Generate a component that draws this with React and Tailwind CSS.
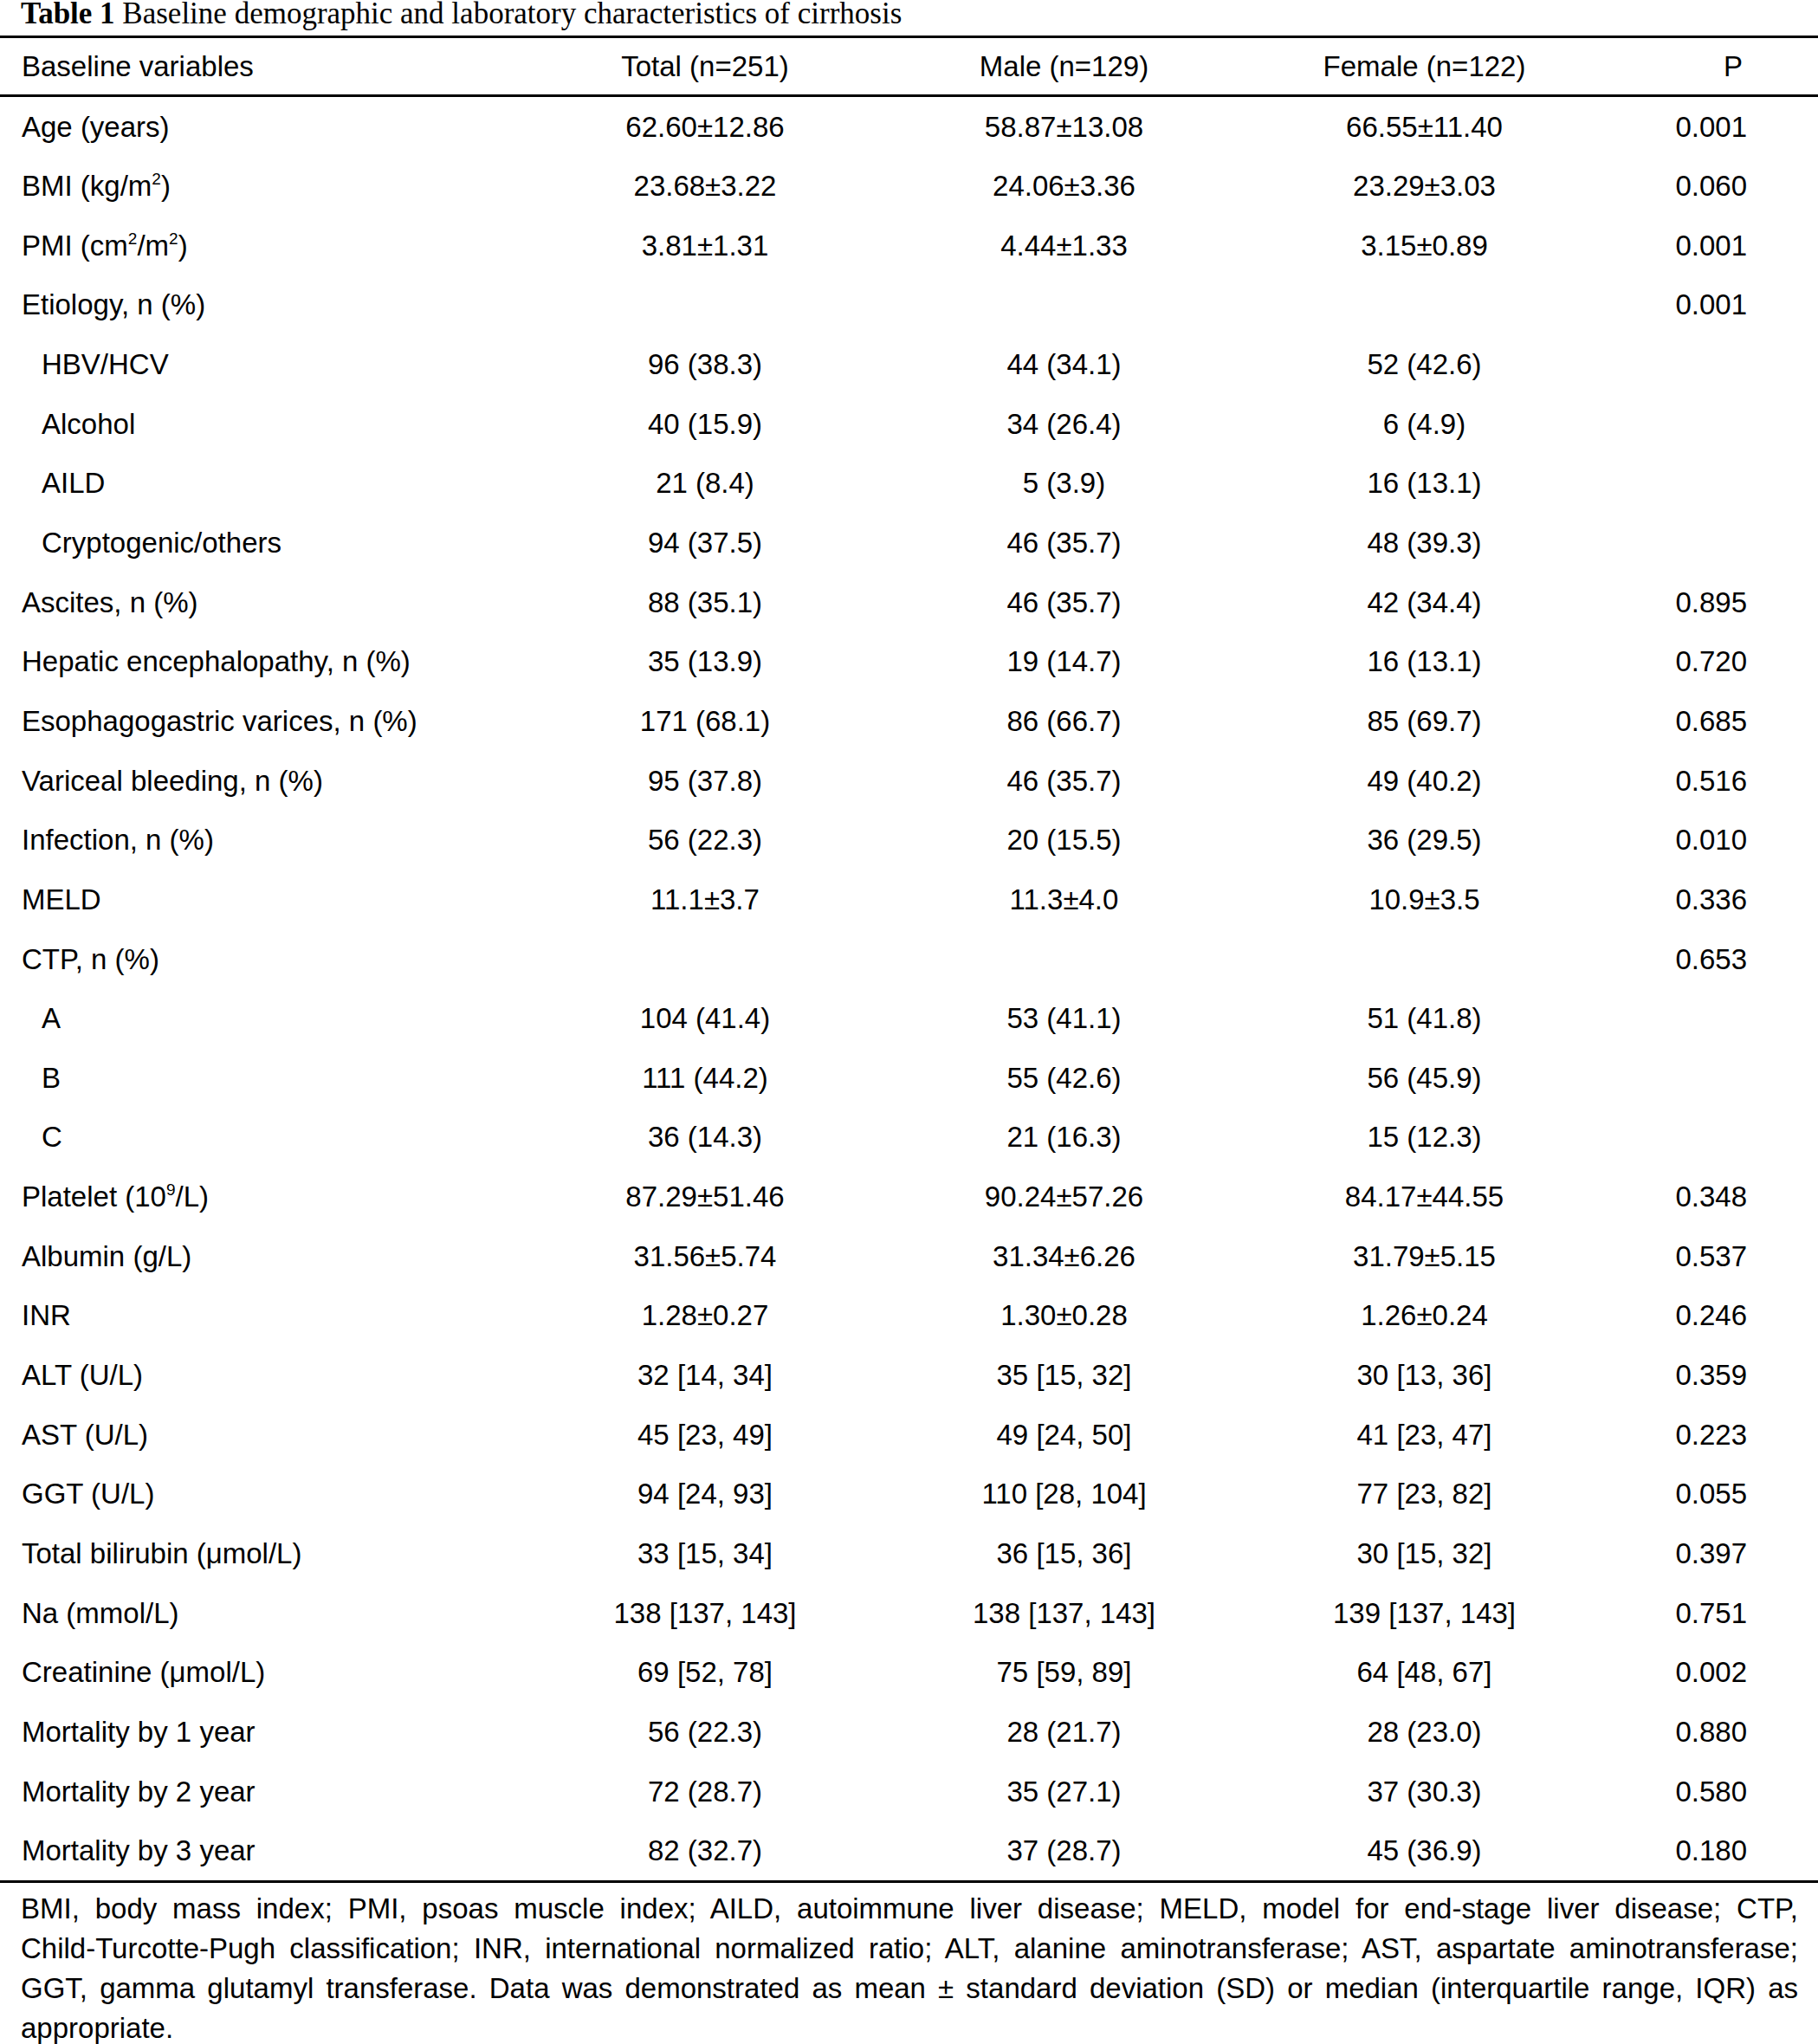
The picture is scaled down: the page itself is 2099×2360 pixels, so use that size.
const Sup = ({ children }) => <sup className="text-[19px] relative -top-[13px]">{children}</sup>;

const rows = [
  { label: 'Age (years)', v: ['62.60±12.86', '58.87±13.08', '66.55±11.40', '0.001'] },
  { label: <>BMI (kg/m<Sup>2</Sup>)</>, v: ['23.68±3.22', '24.06±3.36', '23.29±3.03', '0.060'] },
  { label: <>PMI (cm<Sup>2</Sup>/m<Sup>2</Sup>)</>, v: ['3.81±1.31', '4.44±1.33', '3.15±0.89', '0.001'] },
  { label: 'Etiology, n (%)', v: ['', '', '', '0.001'] },
  { label: 'HBV/HCV', sub: true, v: ['96 (38.3)', '44 (34.1)', '52 (42.6)', ''] },
  { label: 'Alcohol', sub: true, v: ['40 (15.9)', '34 (26.4)', '6 (4.9)', ''] },
  { label: 'AILD', sub: true, v: ['21 (8.4)', '5 (3.9)', '16 (13.1)', ''] },
  { label: 'Cryptogenic/others', sub: true, v: ['94 (37.5)', '46 (35.7)', '48 (39.3)', ''] },
  { label: 'Ascites, n (%)', v: ['88 (35.1)', '46 (35.7)', '42 (34.4)', '0.895'] },
  { label: 'Hepatic encephalopathy, n (%)', v: ['35 (13.9)', '19 (14.7)', '16 (13.1)', '0.720'] },
  { label: 'Esophagogastric varices, n (%)', v: ['171 (68.1)', '86 (66.7)', '85 (69.7)', '0.685'] },
  { label: 'Variceal bleeding, n (%)', v: ['95 (37.8)', '46 (35.7)', '49 (40.2)', '0.516'] },
  { label: 'Infection, n (%)', v: ['56 (22.3)', '20 (15.5)', '36 (29.5)', '0.010'] },
  { label: 'MELD', v: ['11.1±3.7', '11.3±4.0', '10.9±3.5', '0.336'] },
  { label: 'CTP, n (%)', v: ['', '', '', '0.653'] },
  { label: 'A', sub: true, v: ['104 (41.4)', '53 (41.1)', '51 (41.8)', ''] },
  { label: 'B', sub: true, v: ['111 (44.2)', '55 (42.6)', '56 (45.9)', ''] },
  { label: 'C', sub: true, v: ['36 (14.3)', '21 (16.3)', '15 (12.3)', ''] },
  { label: <>Platelet (10<Sup>9</Sup>/L)</>, v: ['87.29±51.46', '90.24±57.26', '84.17±44.55', '0.348'] },
  { label: 'Albumin (g/L)', v: ['31.56±5.74', '31.34±6.26', '31.79±5.15', '0.537'] },
  { label: 'INR', v: ['1.28±0.27', '1.30±0.28', '1.26±0.24', '0.246'] },
  { label: 'ALT (U/L)', v: ['32 [14, 34]', '35 [15, 32]', '30 [13, 36]', '0.359'] },
  { label: 'AST (U/L)', v: ['45 [23, 49]', '49 [24, 50]', '41 [23, 47]', '0.223'] },
  { label: 'GGT (U/L)', v: ['94 [24, 93]', '110 [28, 104]', '77 [23, 82]', '0.055'] },
  { label: 'Total bilirubin (μmol/L)', v: ['33 [15, 34]', '36 [15, 36]', '30 [15, 32]', '0.397'] },
  { label: 'Na (mmol/L)', v: ['138 [137, 143]', '138 [137, 143]', '139 [137, 143]', '0.751'] },
  { label: 'Creatinine (μmol/L)', v: ['69 [52, 78]', '75 [59, 89]', '64 [48, 67]', '0.002'] },
  { label: 'Mortality by 1 year', v: ['56 (22.3)', '28 (21.7)', '28 (23.0)', '0.880'] },
  { label: 'Mortality by 2 year', v: ['72 (28.7)', '35 (27.1)', '37 (30.3)', '0.580'] },
  { label: 'Mortality by 3 year', v: ['82 (32.7)', '37 (28.7)', '45 (36.9)', '0.180'] },
];

const notes = [
  'BMI, body mass index; PMI, psoas muscle index; AILD, autoimmune liver disease; MELD, model for end-stage liver disease; CTP,',
  'Child-Turcotte-Pugh classification; INR, international normalized ratio; ALT, alanine aminotransferase; AST, aspartate aminotransferase;',
  'GGT, gamma glutamyl transferase. Data was demonstrated as mean ± standard deviation (SD) or median (interquartile range, IQR) as',
];

const grid = 'grid grid-cols-[607px_414px_415px_417px_246px] items-center';

const Row = ({ label, sub, v }) => (
  <div className={`${grid} h-[68.65px]`}>
    <div className={sub ? 'pl-[48px]' : 'pl-[25px]'}>{label}</div>
    <div className="text-center">{v[0]}</div>
    <div className="text-center">{v[1]}</div>
    <div className="text-center">{v[2]}</div>
    <div className="text-right pr-[82px]">{v[3]}</div>
  </div>
);

export default function App() {
  return (
    <div className="w-[2099px] h-[2360px] bg-white text-black overflow-hidden">
      {/* TITLE */}
      <div className="h-[41px] pl-[24px] pt-[2px] text-[35px] leading-[28px] whitespace-nowrap" style={{ fontFamily: '"Liberation Serif", serif' }}>
        <span className="font-bold">Table 1</span> Baseline demographic and laboratory characteristics of cirrhosis
      </div>

      <div className="text-[33px]" style={{ fontFamily: '"Liberation Sans", Arial, sans-serif' }}>
        {/* HEADER */}
        <div className={`${grid} h-[71px] border-t-[3px] border-b-[3px] border-black`}>
          <div className="pl-[25px]">Baseline variables</div>
          <div className="text-center">Total (n=251)</div>
          <div className="text-center">Male (n=129)</div>
          <div className="text-center">Female (n=122)</div>
          <div className="text-right pr-[87px]">P</div>
        </div>

        {/* BODY */}
        <div className="border-b-[3px] border-black">
          {rows.map((r, i) => <Row key={i} {...r} />)}
        </div>

        {/* NOTE */}
        <div className="pl-[24px] pr-[23px] pt-[7px] leading-[46px]">
          {notes.map((n, i) => (
            <div key={i} className="text-justify whitespace-nowrap [text-align-last:justify]">{n}</div>
          ))}
          <div>appropriate.</div>
        </div>
      </div>
    </div>
  );
}
